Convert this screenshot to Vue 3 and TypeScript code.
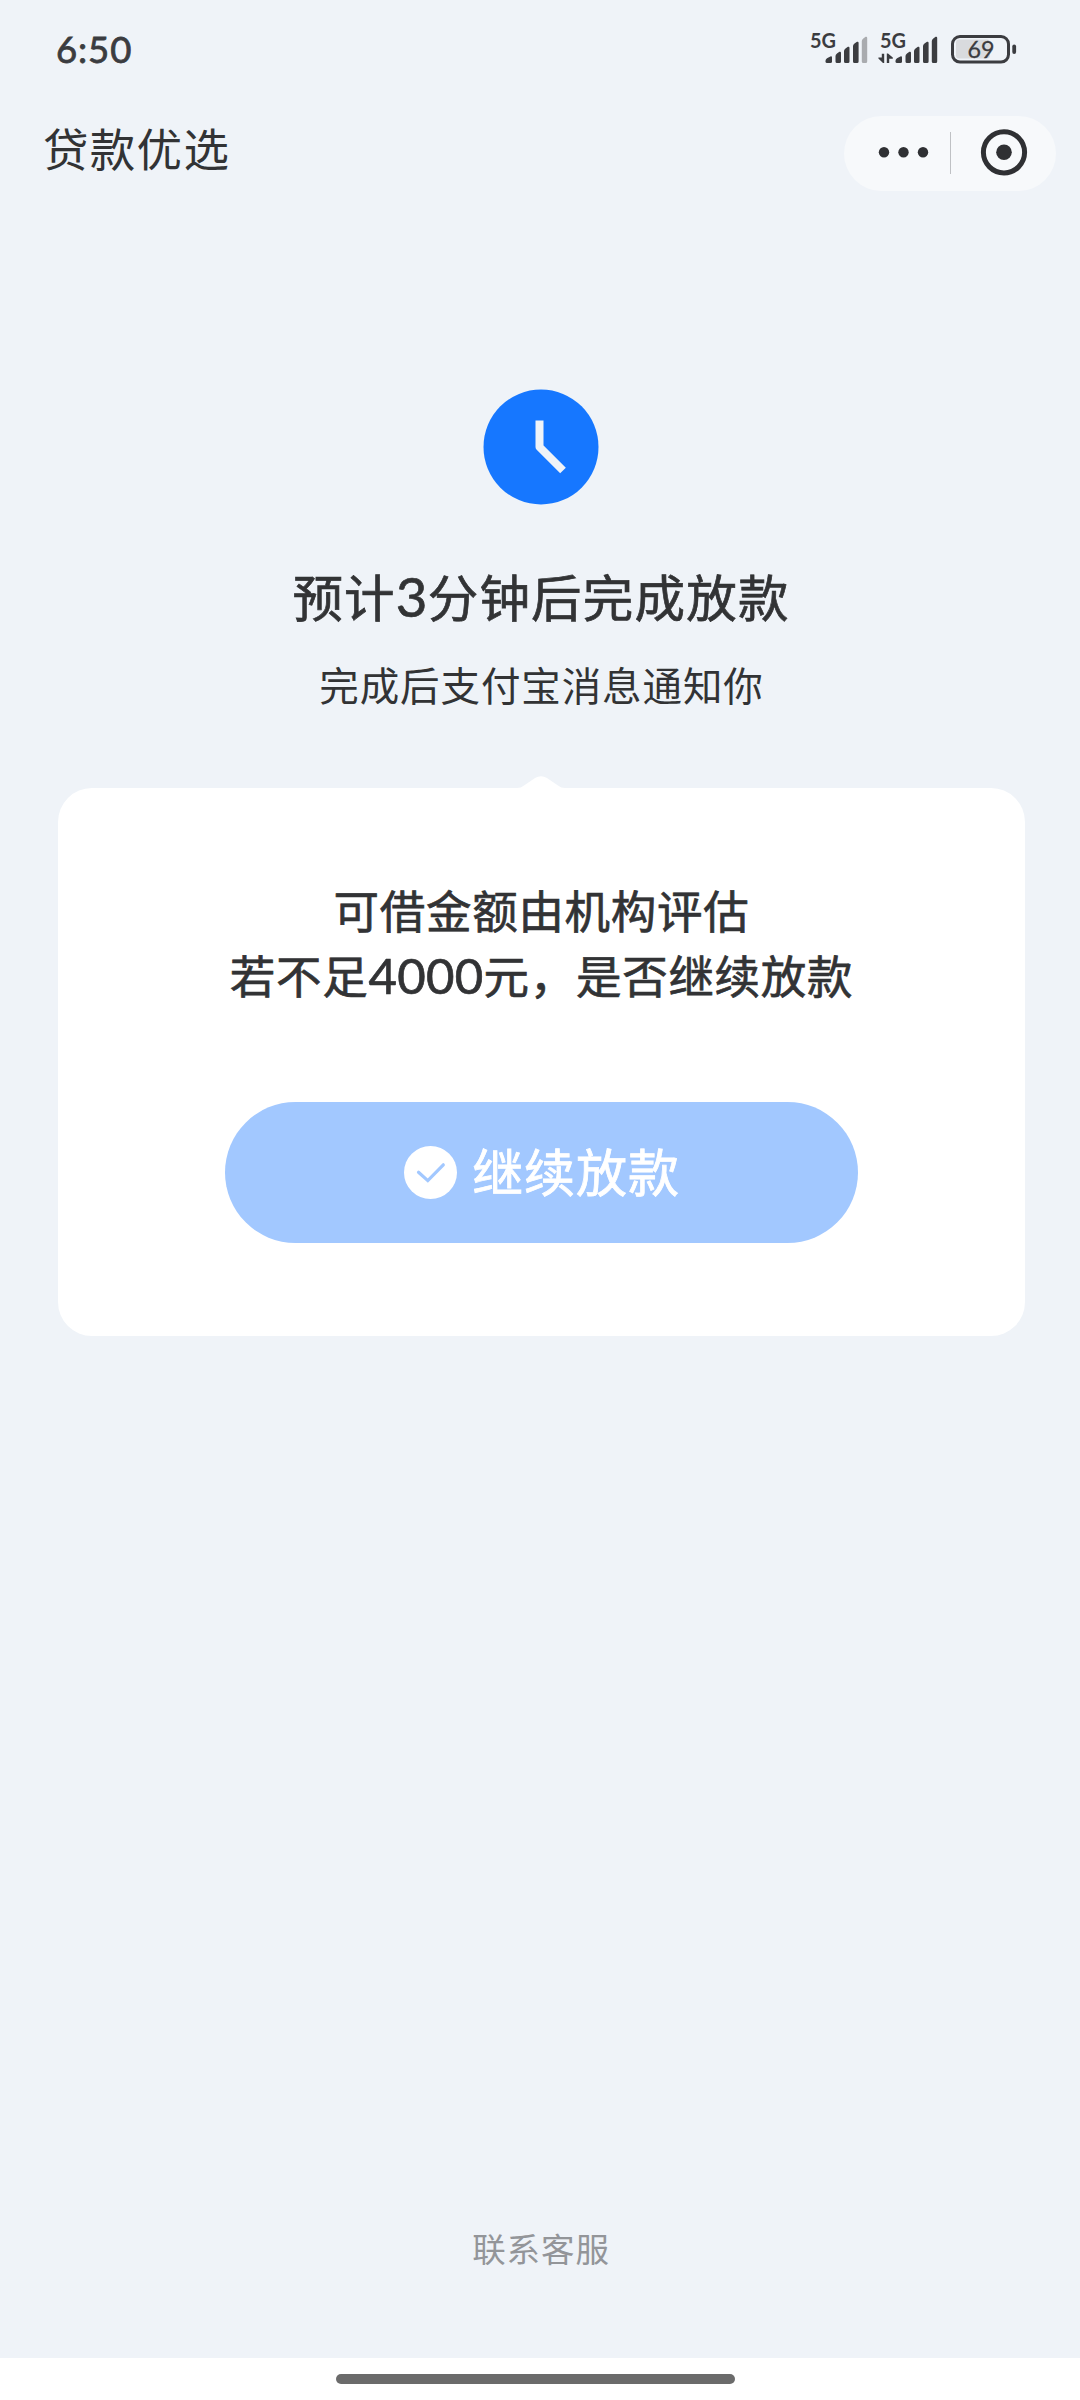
<script setup lang="ts">
interface Bar {
  x: number
  y: number
  w: number
  faded?: boolean
}

const bars = (lastFaded: boolean): Bar[] => [
  { x: 15.5, y: 23.2, w: 6.5 },
  { x: 25.5, y: 18.6, w: 5.5 },
  { x: 34, y: 13.6, w: 5.5 },
  { x: 43, y: 8.6, w: 5.6 },
  { x: 51.8, y: 3.6, w: 5.4, faded: lastFaded },
]

const barPath = ({ x, y, w }: Bar): string =>
  `M${x} 28.5 V${y + 4.5} Q${x} ${y + 3} ${x + 1.5} ${y + 2} L${x + w - 1.6} ${y + 0.2} Q${x + w} ${y - 0.4} ${x + w} ${y + 1.4} V28.5 Q${x + w} 30 ${x + w - 1.5} 30 H${x + 1.5} Q${x} 30 ${x} 28.5 Z`

const signals = [
  { id: 'sim1', bars: bars(true), traffic: false },
  { id: 'sim2', bars: bars(false), traffic: true },
]
</script>

<template>
  <div class="screen">
    <header class="status">
      <span class="time">6:50</span>
      <div class="status-icons">
        <svg v-for="s in signals" :key="s.id" class="signal" width="60" height="32" viewBox="0 0 60 32">
          <text class="net" x="0" y="15.2" textLength="26" lengthAdjust="spacingAndGlyphs">5G</text>
          <path v-for="b in s.bars" :key="b.x" :d="barPath(b)" :fill="b.faded ? '#a9abaf' : '#3b3c40'" />
          <g v-if="s.traffic" fill="#3b3c40">
            <path d="M1.8 20.8 H4.2 V30 H3 L-1.6 25.6 V24.6 H1.8 Z" />
            <path d="M6.8 20.5 H8 L12.8 24.6 V25.8 H9.2 V30 H6.8 Z" />
          </g>
        </svg>
        <svg class="battery" width="68" height="32" viewBox="0 0 68 32">
          <rect x="6" y="6.5" width="34" height="19" rx="3" fill="#d9dbde" />
          <rect x="2.5" y="3.5" width="56" height="25.6" rx="7.5" fill="none" stroke="#3b3c40" stroke-width="3" />
          <rect x="62.3" y="11.5" width="3.8" height="9.4" rx="1.9" fill="#3b3c40" />
          <text class="level" x="17.5" y="24.8" textLength="27" lengthAdjust="spacingAndGlyphs">69</text>
        </svg>
      </div>
    </header>

    <nav class="nav">
      <h1 class="title">贷款优选</h1>
      <div class="capsule">
        <svg width="212" height="75" viewBox="0 0 212 75">
          <g fill="#2f3033">
            <circle cx="40" cy="36.3" r="5.2" />
            <circle cx="59.5" cy="36.3" r="5.2" />
            <circle cx="79" cy="36.3" r="5.2" />
            <circle cx="160" cy="36.3" r="7.8" />
          </g>
          <rect x="106" y="16" width="1" height="42" fill="#bfc1c4" />
          <circle cx="160" cy="36.3" r="20.6" fill="none" stroke="#2f3033" stroke-width="5" />
        </svg>
      </div>
    </nav>

    <main class="main">
      <svg class="clock" width="116" height="116" viewBox="0 0 116 116">
        <circle cx="58" cy="58" r="57.5" fill="#1677ff" />
        <path d="M56.5 31.5 V58 L80 81.5" fill="none" stroke="#eff3f8" stroke-width="8" stroke-linejoin="round" />
      </svg>
      <h2 class="heading">预计<span class="num">3</span>分钟后完成放款</h2>
      <p class="sub">完成后支付宝消息通知你</p>

      <svg class="tip" width="48" height="12" viewBox="0 0 48 12">
        <path d="M0 12 Q4 12 7 9.5 L18 2 Q24 -1.6 30 2 L41 9.5 Q44 12 48 12 Z" fill="#fff" />
      </svg>
      <section class="card">
        <p class="ask">可借金额由机构评估<br />若不足<span class="num">4000</span>元，是否继续放款</p>
        <button class="confirm" type="button">
          <svg width="53" height="53" viewBox="0 0 53 53">
            <circle cx="26.5" cy="26.5" r="26.5" fill="#fff" />
            <path d="M14.5 26.2 L23.8 34.6 L39.3 18.8" fill="none" stroke="#a2c8ff" stroke-width="3.2" stroke-linecap="round" />
          </svg>
          <span class="confirm-text">继续放款</span>
        </button>
      </section>
    </main>

    <a class="service">联系客服</a>
    <footer class="gesture"><i class="handle"></i></footer>
  </div>
</template>

<style>
body {
  margin: 0;
  background: #eff3f8;
}
</style>

<style scoped>
.screen {
  display: flex;
  flex-direction: column;
  width: 1080px;
  height: 2400px;
  overflow: hidden;
  background: #eff3f8;
  color: #323335;
  font-family: "Noto Sans CJK SC", sans-serif;
}

h1,
h2,
p {
  margin: 0;
  font-weight: 400;
}

.status {
  display: flex;
  justify-content: space-between;
  align-items: flex-start;
  height: 83px;
  padding: 33px 62px 0 56px;
  flex: none;
}

.time {
  margin-top: -6px;
  color: #3b3c40;
  font: 400 36.5px/44px Lato, sans-serif;
  letter-spacing: 0.9px;
  -webkit-text-stroke: 0.8px #3b3c40;
}

.status-icons {
  display: flex;
}

.signal {
  margin-right: 10px;
  overflow: visible;
}

.net {
  fill: #3b3c40;
  font: 700 20px Lato, sans-serif;
}

.level {
  fill: #3b3c40;
  font: 400 23.5px Lato, sans-serif;
  stroke: #3b3c40;
  stroke-width: 0.3px;
}

.nav {
  display: flex;
  justify-content: space-between;
  height: 75px;
  padding: 0 24px 0 43px;
  flex: none;
}

.title {
  font-size: 45.5px;
  line-height: 62px;
  letter-spacing: 1.3px;
}

.capsule {
  height: 75px;
  border-radius: 38px;
  background: #f7f9fb;
}

.main {
  display: flex;
  flex-direction: column;
  align-items: center;
  padding-top: 198px;
  padding-left: 2px;
}

.heading {
  margin-top: 60px;
  font-size: 50.5px;
  line-height: 60px;
  letter-spacing: 1.2px;
  -webkit-text-stroke: 0.7px #323335;
}

.num {
  font-family: Lato, sans-serif;
  font-size: 1.08em;
  line-height: 1;
  letter-spacing: 0.3px;
}

.sub {
  margin-top: 34px;
  padding-left: 1px;
  font-size: 39.5px;
  line-height: 50px;
  letter-spacing: 0.9px;
}

.tip {
  margin-top: 67px;
}

.card {
  display: flex;
  flex-direction: column;
  align-items: center;
  width: 967px;
  height: 548px;
  border-radius: 34px;
  background: #fff;
}

.ask {
  margin-top: 89px;
  padding-left: 1px;
  font-size: 45.5px;
  line-height: 65px;
  letter-spacing: 0.7px;
  text-align: center;
  -webkit-text-stroke: 0.7px #323335;
}

.confirm {
  display: flex;
  align-items: center;
  justify-content: center;
  gap: 15px;
  width: 633px;
  height: 141px;
  margin-top: 95px;
  padding: 0 0 0 2px;
  box-sizing: border-box;
  border: 0;
  border-radius: 71px;
  background: #a2c8ff;
  color: #fff;
  font-family: inherit;
}

.confirm-text {
  margin-top: -6px;
  font-size: 51px;
  line-height: 60px;
  letter-spacing: 0.9px;
  -webkit-text-stroke: 0.8px #fff;
}

.service {
  margin-top: auto;
  margin-bottom: 90px;
  padding-left: 2px;
  color: #939599;
  font-size: 33.5px;
  line-height: 40px;
  letter-spacing: 0.9px;
  text-align: center;
}

.gesture {
  display: flex;
  justify-content: center;
  height: 42px;
  padding-right: 9px;
  background: #fff;
  flex: none;
}

.handle {
  width: 399px;
  height: 10px;
  margin-top: 16px;
  border-radius: 5px;
  background: #6b6b6b;
}
</style>
